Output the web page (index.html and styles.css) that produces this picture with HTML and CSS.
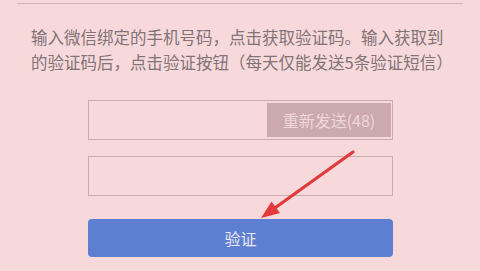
FILE: index.html
```html
<!DOCTYPE html>
<html lang="zh-CN">
<head>
    <meta charset="UTF-8">
    <meta name="viewport" content="width=device-width, initial-scale=1.0">
    <title>验证手机号</title>
    <link rel="stylesheet" href="styles.css">
</head>
<body>

<div class="page">
    <div class="top-rule"></div>

    <!-- Hint text -->
    <p class="hint">输入微信绑定的手机号码，点击获取验证码。输入获取到的验证码后，点击验证按钮（每天仅能发送5条验证短信）</p>

    <!-- Form -->
    <div class="form">
        <div class="field">
            <input type="text" class="field-input">
            <button class="resend-btn">重新发送(48)</button>
        </div>
        <div class="field">
            <input type="text" class="field-input">
        </div>
        <button class="verify-btn">验证</button>
    </div>

    <!-- Annotation arrow -->
    <svg class="arrow" width="480" height="271" viewBox="0 0 480 271">
        <line x1="353" y1="152" x2="272" y2="210" stroke="#e2393b" stroke-width="3.2" stroke-linecap="round"/>
        <polygon points="261,218 280,213 271.5,201.5" fill="#e2393b"/>
    </svg>
</div>

</body>
</html>
```

FILE: styles.css
```css
body {
    margin: 0;
    background: #f7d9dc;
    font-family: "Noto Sans CJK SC", "Noto Sans", sans-serif;
    overflow: hidden;
}

.page {
    position: relative;
    width: 480px;
    height: 271px;
}

.top-rule {
    margin: 0 17px;
    padding-top: 3px;
    border-bottom: 1px solid #cdb6b9;
}

.hint {
    margin: 21px 0 0 31px;
    width: 420px;
    font-size: 16.5px;
    line-height: 25px;
    color: #827376;
}

.form {
    margin: 25px 0 0 88px;
    width: 305px;
    display: flex;
    flex-direction: column;
    gap: 16px;
}

.field {
    height: 40px;
    box-sizing: border-box;
    border: 1px solid #c7adb0;
    display: flex;
    align-items: center;
    justify-content: flex-end;
    padding: 0 1px;
}

.field-input {
    flex: 1;
    min-width: 0;
    height: 100%;
    border: none;
    background: transparent;
    outline: none;
    padding: 0 8px;
}

.resend-btn {
    width: 124px;
    height: 34px;
    border: none;
    background: #cba9ad;
    color: #efd8db;
    font-family: inherit;
    font-size: 16px;
    padding: 0;
}

.verify-btn {
    margin-top: 7px;
    height: 38px;
    border: none;
    border-radius: 4px;
    background: #5c7fd1;
    color: #e9e9f2;
    font-family: inherit;
    font-size: 16px;
    padding: 0;
}

.arrow {
    position: absolute;
    left: 0;
    top: 0;
    pointer-events: none;
}
```
